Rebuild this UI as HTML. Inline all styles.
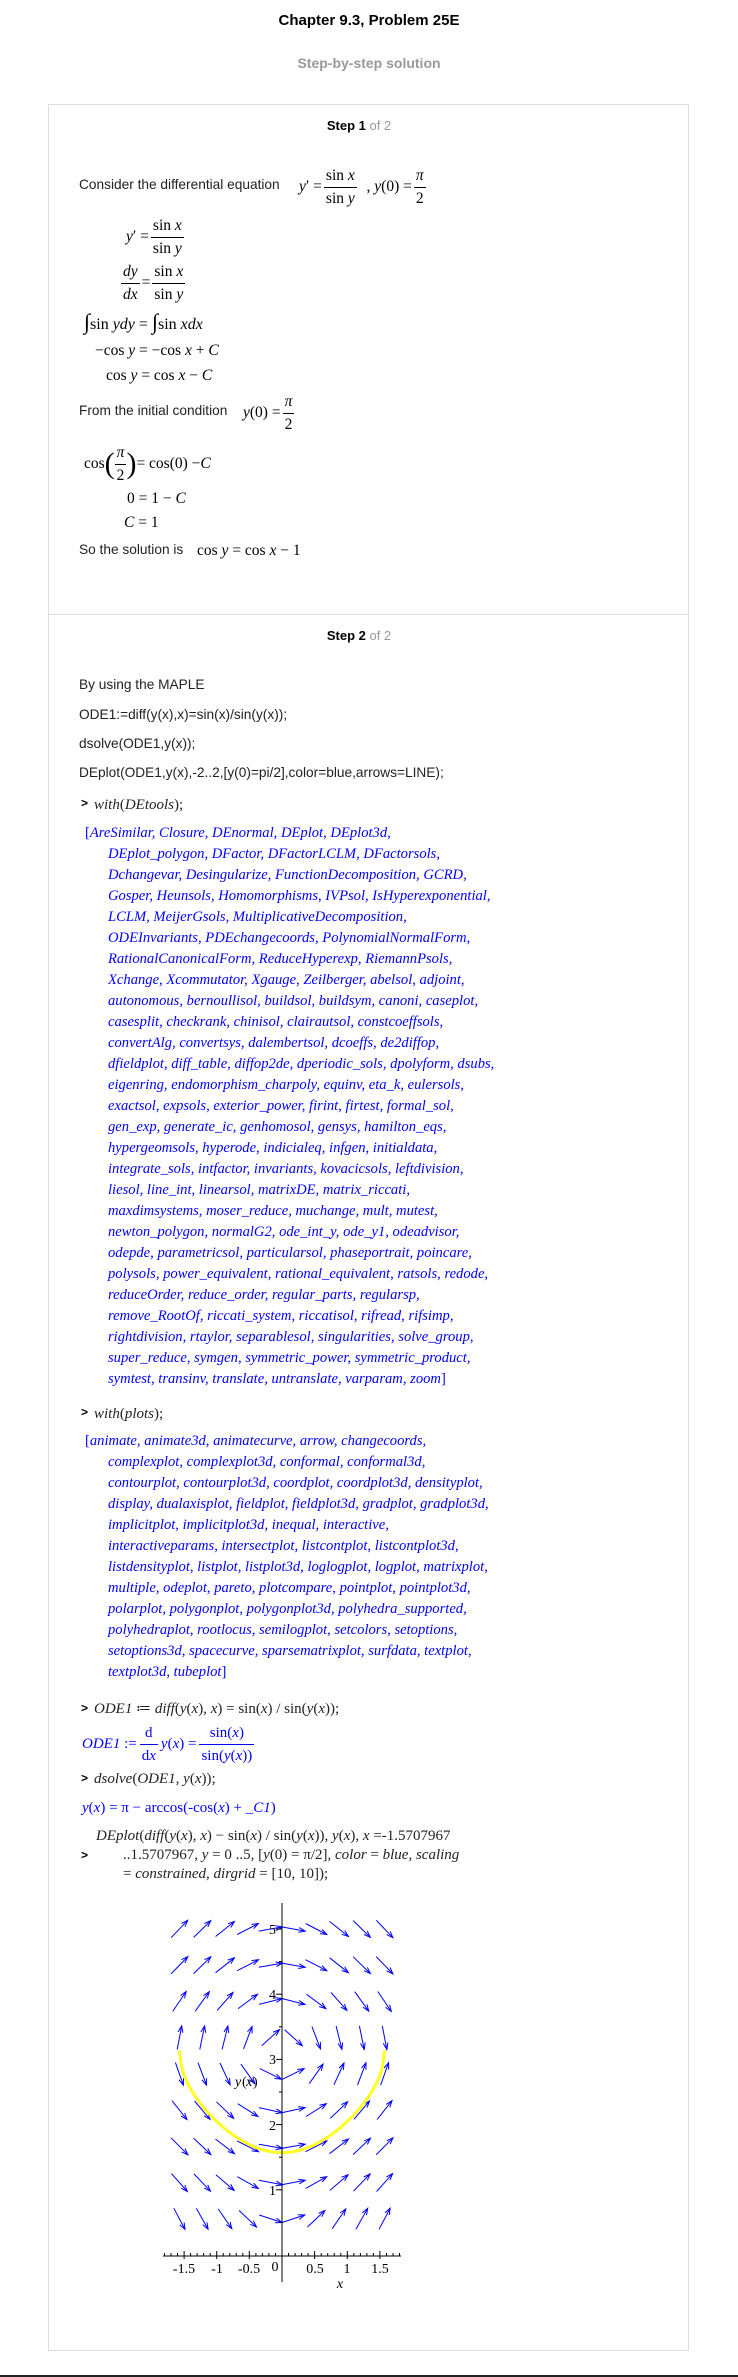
<!DOCTYPE html>
<html><head><meta charset="utf-8">
<style>
html,body{margin:0;padding:0;background:#fff;}
body{width:738px;height:2377px;position:relative;overflow:hidden;font-family:"Liberation Sans",Arial,sans-serif;color:#222;}
.l{position:absolute;white-space:nowrap;line-height:20px;height:20px;font-size:13.7px;}
.m{font-family:"Liberation Serif","Times New Roman",serif;font-size:15.5px;color:#000;}
.f{position:absolute;white-space:nowrap;display:flex;align-items:center;height:48px;font-family:"Liberation Serif",serif;font-size:15.5px;color:#000;}
.fr{display:inline-flex;flex-direction:column;text-align:center;margin:0 2px;}
.fr>span{line-height:22px;padding:0 2px;}
.fr>span:first-child{border-bottom:1px solid #000;}
i{font-style:italic;}
.b{color:#00f;}
.mp{position:absolute;white-space:nowrap;font-family:"Liberation Serif",serif;font-size:15px;line-height:21px;height:21px;}
.li{position:absolute;left:108px;white-space:nowrap;font-family:"Liberation Serif",serif;font-style:italic;font-size:14.6px;line-height:21px;color:#00f;}
.gt{position:absolute;left:81px;font-family:"Liberation Sans",sans-serif;font-weight:bold;font-size:12px;line-height:14px;color:#000;}
</style></head><body>

<div class="l" style="left:0;width:738px;text-align:center;top:11px;font-size:15px;font-weight:bold;color:#000;">Chapter 9.3, Problem 25E</div>
<div class="l" style="left:0;width:738px;text-align:center;top:53px;font-size:14px;font-weight:bold;color:#999;">Step-by-step solution</div>

<div style="position:absolute;left:48px;top:104px;width:639px;height:2245px;border:1px solid #ddd;"></div>
<div style="position:absolute;left:49px;top:614px;width:639px;height:1px;background:#ddd;"></div>
<div style="position:absolute;left:0;top:2375px;width:738px;height:2px;background:#222;"></div>

<div class="l" style="left:0;width:718px;text-align:center;top:116px;font-weight:bold;color:#000;font-size:13px;">Step 1 <span style="font-weight:normal;color:#999;">of 2</span></div>

<div class="l" style="left:79px;top:175px;">Consider the differential equation</div>
<div class="f" style="left:299px;top:163px;"><i>y</i>′ =<span class="fr"><span>sin <i>x</i></span><span>sin <i>y</i></span></span>&nbsp; ,&nbsp; <i>y</i>(0) =<span class="fr"><span><i>π</i></span><span>2</span></span></div>

<div class="f" style="left:126px;top:213px;"><i>y</i>′ =<span class="fr"><span>sin <i>x</i></span><span>sin <i>y</i></span></span></div>
<div class="f" style="left:119px;top:259px;"><span class="fr"><span><i>dy</i></span><span><i>dx</i></span></span>=<span class="fr"><span>sin <i>x</i></span><span>sin <i>y</i></span></span></div>
<div class="l m" style="left:84px;top:312px;font-size:16px;"><span style="font-size:22px;">∫</span>sin <i>ydy</i> = <span style="font-size:22px;">∫</span>sin <i>xdx</i></div>
<div class="l m" style="left:95px;top:341px;">−cos <i>y</i> = −cos <i>x</i> + <i>C</i></div>
<div class="l m" style="left:106px;top:366px;">cos <i>y</i> = cos <i>x</i> − <i>C</i></div>

<div class="l" style="left:79px;top:401px;">From the initial condition</div>
<div class="f" style="left:243px;top:389px;"><i>y</i>(0) =<span class="fr"><span><i>π</i></span><span>2</span></span></div>
<div class="f" style="left:84px;top:440px;">cos<span style="font-size:30px;line-height:30px;">(</span><span class="fr" style="margin:0;"><span><i>π</i></span><span>2</span></span><span style="font-size:30px;line-height:30px;">)</span>= cos(0) − <i>C</i></div>
<div class="l m" style="left:127px;top:489px;">0 = 1 − <i>C</i></div>
<div class="l m" style="left:124px;top:513px;"><i>C</i> = 1</div>
<div class="l" style="left:79px;top:540px;">So the solution is</div>
<div class="l m" style="left:197px;top:541px;">cos <i>y</i> = cos <i>x</i> − 1</div>

<div class="l" style="left:0;width:718px;text-align:center;top:626px;font-weight:bold;color:#000;font-size:13px;">Step 2 <span style="font-weight:normal;color:#999;">of 2</span></div>
<div class="l" style="left:79px;top:675px;">By using the MAPLE</div>
<div class="l" style="left:79px;top:705px;">ODE1:=diff(y(x),x)=sin(x)/sin(y(x));</div>
<div class="l" style="left:79px;top:734px;">dsolve(ODE1,y(x));</div>
<div class="l" style="left:79px;top:763px;">DEplot(ODE1,y(x),-2..2,[y(0)=pi/2],color=blue,arrows=LINE);</div>

<div class="gt" style="top:796px;">&gt;</div>
<div class="mp" style="left:94px;top:795px;color:#222;"><i>with</i>(<i>DEtools</i>);</div>
<div class="mp" style="left:85px;top:823px;color:#00f;font-style:italic;font-size:14.6px;"><span style="font-style:normal">[</span>AreSimilar, Closure, DEnormal, DEplot, DEplot3d,</div>
<div class="li" style="top:844px;">DEplot_polygon, DFactor, DFactorLCLM, DFactorsols,</div>
<div class="li" style="top:865px;">Dchangevar, Desingularize, FunctionDecomposition, GCRD,</div>
<div class="li" style="top:886px;">Gosper, Heunsols, Homomorphisms, IVPsol, IsHyperexponential,</div>
<div class="li" style="top:907px;">LCLM, MeijerGsols, MultiplicativeDecomposition,</div>
<div class="li" style="top:928px;">ODEInvariants, PDEchangecoords, PolynomialNormalForm,</div>
<div class="li" style="top:949px;">RationalCanonicalForm, ReduceHyperexp, RiemannPsols,</div>
<div class="li" style="top:970px;">Xchange, Xcommutator, Xgauge, Zeilberger, abelsol, adjoint,</div>
<div class="li" style="top:991px;">autonomous, bernoullisol, buildsol, buildsym, canoni, caseplot,</div>
<div class="li" style="top:1012px;">casesplit, checkrank, chinisol, clairautsol, constcoeffsols,</div>
<div class="li" style="top:1033px;">convertAlg, convertsys, dalembertsol, dcoeffs, de2diffop,</div>
<div class="li" style="top:1054px;">dfieldplot, diff_table, diffop2de, dperiodic_sols, dpolyform, dsubs,</div>
<div class="li" style="top:1075px;">eigenring, endomorphism_charpoly, equinv, eta_k, eulersols,</div>
<div class="li" style="top:1096px;">exactsol, expsols, exterior_power, firint, firtest, formal_sol,</div>
<div class="li" style="top:1117px;">gen_exp, generate_ic, genhomosol, gensys, hamilton_eqs,</div>
<div class="li" style="top:1138px;">hypergeomsols, hyperode, indicialeq, infgen, initialdata,</div>
<div class="li" style="top:1159px;">integrate_sols, intfactor, invariants, kovacicsols, leftdivision,</div>
<div class="li" style="top:1180px;">liesol, line_int, linearsol, matrixDE, matrix_riccati,</div>
<div class="li" style="top:1201px;">maxdimsystems, moser_reduce, muchange, mult, mutest,</div>
<div class="li" style="top:1222px;">newton_polygon, normalG2, ode_int_y, ode_y1, odeadvisor,</div>
<div class="li" style="top:1243px;">odepde, parametricsol, particularsol, phaseportrait, poincare,</div>
<div class="li" style="top:1264px;">polysols, power_equivalent, rational_equivalent, ratsols, redode,</div>
<div class="li" style="top:1285px;">reduceOrder, reduce_order, regular_parts, regularsp,</div>
<div class="li" style="top:1306px;">remove_RootOf, riccati_system, riccatisol, rifread, rifsimp,</div>
<div class="li" style="top:1327px;">rightdivision, rtaylor, separablesol, singularities, solve_group,</div>
<div class="li" style="top:1348px;">super_reduce, symgen, symmetric_power, symmetric_product,</div>
<div class="li" style="top:1369px;">symtest, transinv, translate, untranslate, varparam, zoom<span style="font-style:normal">]</span></div>

<div class="gt" style="top:1405px;">&gt;</div>
<div class="mp" style="left:94px;top:1404px;color:#222;"><i>with</i>(<i>plots</i>);</div>
<div class="mp" style="left:85px;top:1431px;color:#00f;font-style:italic;font-size:14.6px;"><span style="font-style:normal">[</span>animate, animate3d, animatecurve, arrow, changecoords,</div>
<div class="li" style="top:1452px;">complexplot, complexplot3d, conformal, conformal3d,</div>
<div class="li" style="top:1473px;">contourplot, contourplot3d, coordplot, coordplot3d, densityplot,</div>
<div class="li" style="top:1494px;">display, dualaxisplot, fieldplot, fieldplot3d, gradplot, gradplot3d,</div>
<div class="li" style="top:1515px;">implicitplot, implicitplot3d, inequal, interactive,</div>
<div class="li" style="top:1536px;">interactiveparams, intersectplot, listcontplot, listcontplot3d,</div>
<div class="li" style="top:1557px;">listdensityplot, listplot, listplot3d, loglogplot, logplot, matrixplot,</div>
<div class="li" style="top:1578px;">multiple, odeplot, pareto, plotcompare, pointplot, pointplot3d,</div>
<div class="li" style="top:1599px;">polarplot, polygonplot, polygonplot3d, polyhedra_supported,</div>
<div class="li" style="top:1620px;">polyhedraplot, rootlocus, semilogplot, setcolors, setoptions,</div>
<div class="li" style="top:1641px;">setoptions3d, spacecurve, sparsematrixplot, surfdata, textplot,</div>
<div class="li" style="top:1662px;">textplot3d, tubeplot<span style="font-style:normal">]</span></div>

<div class="gt" style="top:1701px;">&gt;</div>
<div class="mp" style="left:94px;top:1699px;color:#222;"><i>ODE1</i> ≔ <i>diff</i>(<i>y</i>(<i>x</i>), <i>x</i>) = sin(<i>x</i>) / sin(<i>y</i>(<i>x</i>));</div>
<div class="f b" style="left:82px;top:1720px;font-size:15px;color:#00f;"><i>ODE1</i>&nbsp;:=<span class="fr" style="margin:0 3px;"><span style="border-color:#00f;">d</span><span>d<i>x</i></span></span><i>y</i>(<i>x</i>) =<span class="fr" style="margin:0 3px;"><span style="border-color:#00f;">sin(<i>x</i>)</span><span>sin(<i>y</i>(<i>x</i>))</span></span></div>
<div class="gt" style="top:1771px;">&gt;</div>
<div class="mp" style="left:94px;top:1769px;color:#222;"><i>dsolve</i>(<i>ODE1</i>, <i>y</i>(<i>x</i>));</div>
<div class="mp" style="left:82px;top:1798px;color:#00f;"><i>y</i>(<i>x</i>) = π − arccos(‑cos(<i>x</i>) + _<i>C1</i>)</div>
<div class="mp" style="left:96px;top:1826px;color:#222;"><i>DEplot</i>(<i>diff</i>(<i>y</i>(<i>x</i>), <i>x</i>) − sin(<i>x</i>) / sin(<i>y</i>(<i>x</i>)), <i>y</i>(<i>x</i>), <i>x</i> =‑1.5707967</div>
<div class="gt" style="top:1848px;">&gt;</div>
<div class="mp" style="left:123px;top:1845px;color:#222;">..1.5707967, <i>y</i> = 0 ..5, [<i>y</i>(0) = π/2], <i>color</i> = <i>blue</i>, <i>scaling</i></div>
<div class="mp" style="left:123px;top:1864px;color:#222;">= <i>constrained</i>, <i>dirgrid</i> = [10, 10]);</div>

<svg id="plot" style="position:absolute;left:0;top:0;" width="738" height="2377" viewBox="0 0 738 2377" xmlns="http://www.w3.org/2000/svg">
<g id="ar" stroke="#0000ff" stroke-width="1" fill="none"></g>
<path id="cur" fill="none" stroke="#ffff22" stroke-width="3"></path>
<g stroke="#000" stroke-width="1">
<line x1="282" y1="1903" x2="282" y2="2282"/>
<line x1="163" y1="2256" x2="401" y2="2256"/>
</g>
<g id="tk" stroke="#000" stroke-width="1"></g>
<g font-family="Liberation Serif, serif" font-size="14" fill="#000">
<text x="276" y="1934" text-anchor="end">5</text>
<text x="276" y="1999" text-anchor="end">4</text>
<text x="276" y="2064" text-anchor="end">3</text>
<text x="276" y="2130" text-anchor="end">2</text>
<text x="276" y="2195" text-anchor="end">1</text>
<text x="184" y="2273" text-anchor="middle">-1.5</text>
<text x="217" y="2273" text-anchor="middle">-1</text>
<text x="249" y="2273" text-anchor="middle">-0.5</text>
<text x="275" y="2271" text-anchor="middle">0</text>
<text x="315" y="2273" text-anchor="middle">0.5</text>
<text x="347" y="2273" text-anchor="middle">1</text>
<text x="380" y="2273" text-anchor="middle">1.5</text>
<text x="340" y="2288" text-anchor="middle" font-style="italic">x</text>
<text x="235" y="2086" font-style="italic">y</text><text x="242" y="2086">(</text><text x="246" y="2086" font-style="italic">x</text><text x="253" y="2086">)</text>
</g>
</svg>
<script>
(function(){
var X=function(x){return 282+65.3*x;},Y=function(y){return 2255-65.2*y;};
var s='',i,j;
for(i=0;i<10;i++){for(j=1;j<10;j++){
var x=-Math.PI/2+i*Math.PI/9,y=j*5/9;
var sl=Math.sin(x)/Math.sin(y);
var dx=1,dy=-sl,n=Math.sqrt(dx*dx+dy*dy);dx/=n;dy/=n;
var cx=X(x),cy=Y(y),L=12;
var x1=cx-dx*L,y1=cy-dy*L,x2=cx+dx*L,y2=cy+dy*L;
var a=Math.atan2(dy,dx),h=7,w=0.35;
var hx1=x2-h*Math.cos(a-w),hy1=y2-h*Math.sin(a-w),hx2=x2-h*Math.cos(a+w),hy2=y2-h*Math.sin(a+w);
s+='<line x1="'+x1.toFixed(1)+'" y1="'+y1.toFixed(1)+'" x2="'+x2.toFixed(1)+'" y2="'+y2.toFixed(1)+'"/>';
s+='<polyline points="'+hx1.toFixed(1)+','+hy1.toFixed(1)+' '+x2.toFixed(1)+','+y2.toFixed(1)+' '+hx2.toFixed(1)+','+hy2.toFixed(1)+'"/>';
}}
document.getElementById('ar').innerHTML=s;
var d='';
for(i=0;i<=100;i++){var x=-Math.PI/2+i*Math.PI/100;var y=Math.acos(Math.max(-1,Math.cos(x)-1));d+=(i?'L':'M')+X(x).toFixed(1)+' '+Y(y).toFixed(1);}
document.getElementById('cur').setAttribute('d',d);
var t='';
for(i=-18;i<=18;i++){var xx=X(i/10);var big=(i%5==0);t+='<line x1="'+xx.toFixed(1)+'" y1="'+(2256-(big?5:3))+'" x2="'+xx.toFixed(1)+'" y2="'+(2256+(big?3:0))+'"/>';}
for(i=1;i<=10;i++){var yy=Y(i/2);var big=(i%2==0);t+='<line x1="'+(282-(big?6:3))+'" y1="'+yy.toFixed(1)+'" x2="282" y2="'+yy.toFixed(1)+'"/>';}
document.getElementById('tk').innerHTML=t;
})();
</script>
</body></html>
